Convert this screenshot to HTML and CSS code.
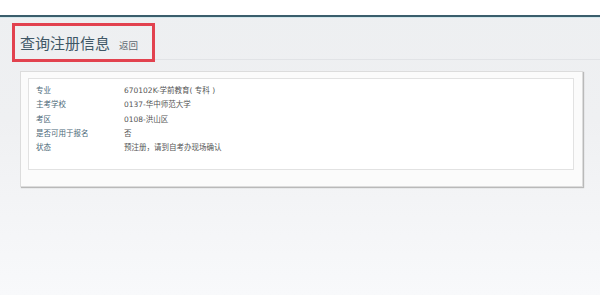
FILE: index.html
```html
<!DOCTYPE html>
<html>

<head>
    <meta charset="UTF-8">
    <title>查询注册信息</title>
    <link rel="stylesheet" href="styles.css">
</head>

<body>
    <div class="topbar"></div>

    <div class="page">
        <div class="page-header">
            <div class="title-box">
                <h1>查询注册信息</h1>
                <a class="back" href="#">返回</a>
            </div>
        </div>

        <div class="card">
            <div class="info">
                <dl class="info-row">
                    <dt>专业</dt>
                    <dd>670102K-学前教育( 专科 )</dd>
                </dl>
                <dl class="info-row">
                    <dt>主考学校</dt>
                    <dd>0137-华中师范大学</dd>
                </dl>
                <dl class="info-row">
                    <dt>考区</dt>
                    <dd>0108-洪山区</dd>
                </dl>
                <dl class="info-row">
                    <dt>是否可用于报名</dt>
                    <dd>否</dd>
                </dl>
                <dl class="info-row">
                    <dt>状态</dt>
                    <dd>预注册，请到自考办现场确认</dd>
                </dl>
            </div>
        </div>
    </div>
</body>

</html>
```

FILE: styles.css
```css
html,
body {
    margin: 0;
    padding: 0;
    height: 100%;
}

div,
dl,
dt,
dd {
    box-sizing: border-box;
}

body {
    font-family: "DejaVu Sans", "Noto Sans CJK SC", sans-serif;
    background: linear-gradient(#edeff1 0, #eff0f2 120px, #f8f9fb 100%);
    color: #555;
}

.topbar {
    height: 17px;
    background: #fff;
    border-bottom: 2px solid #3a5e6c;
    box-shadow: 0 1px 0 #d3e7eb;
}

.page {
    padding: 0 17px 0 12px;
}

.page-header {
    display: flex;
    align-items: flex-end;
    margin-top: 6px;
    margin-right: -17px;
    border-bottom: 1px solid #e1e3e6;
}

.title-box {
    display: flex;
    align-items: baseline;
    flex-shrink: 0;
    width: 143px;
    height: 39px;
    padding: 0 5px;
    margin-bottom: -3px;
    border: 3px solid #e2424f;
    white-space: nowrap;
    font-family: "Noto Sans CJK SC", sans-serif;
}

.title-box h1 {
    margin: 0;
    font-size: 15px;
    font-weight: normal;
    line-height: 33px;
    color: #3f5766;
}

.back {
    margin-left: 9px;
    font-size: 9.5px;
    color: #5d6870;
    text-decoration: none;
}

.card {
    margin: 11px 0 0 8px;
    padding: 6px 8px 16px 7px;
    background: #fbfbfb;
    border: 1px solid #dcdcdc;
    box-shadow: 1px 1px 1px #b9b9b9;
}

.info {
    padding: 5px 8px 14px 7px;
    background: #fff;
    border: 1px solid #e2e2e2;
}

.info-row {
    display: flex;
    margin: 0;
    font-size: 7.5px;
    line-height: 14.25px;
}

.info-row dt {
    width: 88px;
    color: #4b6878;
}

.info-row dd {
    margin: 0;
    color: #555;
}
```
